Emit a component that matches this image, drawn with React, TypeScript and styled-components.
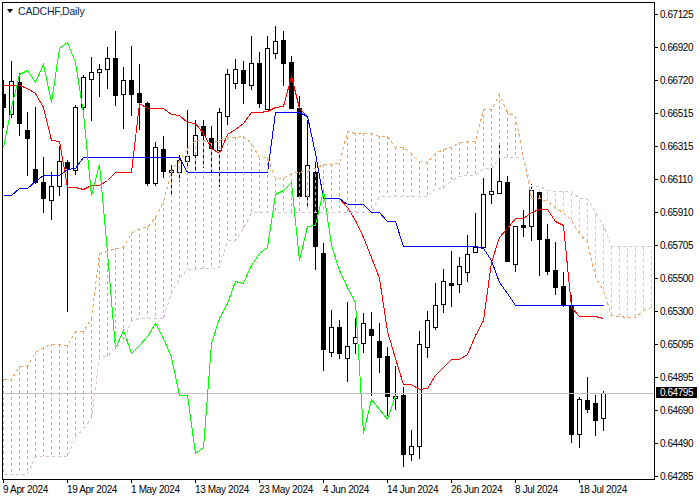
import styled, { createGlobalStyle } from "styled-components";

// [high, low, bodyTop, bodyBottom, bull]
type Candle = [number, number, number, number, number];

const candles: Candle[] = [
  [80, 128, 94, 107, 0], [61, 118, 81, 114, 1], [73, 136, 82, 123, 0], [112, 176, 130, 138, 0],
  [107, 184, 169, 182, 0], [157, 213, 182, 198, 0], [172, 220, 186, 200, 1], [146, 196, 161, 186, 1],
  [160, 312, 162, 168, 0], [105, 175, 107, 170, 1], [75, 112, 77, 107, 1], [57, 121, 72, 79, 1],
  [64, 97, 69, 72, 1], [47, 89, 58, 69, 1], [31, 106, 58, 95, 0], [67, 129, 80, 94, 1],
  [46, 116, 80, 94, 0], [64, 130, 93, 102, 0], [102, 186, 103, 183, 0], [142, 186, 147, 183, 1],
  [136, 178, 149, 171, 0], [165, 197, 170, 172, 1], [155, 182, 160, 172, 1], [110, 168, 156, 161, 1],
  [120, 170, 135, 155, 1], [120, 168, 126, 135, 0], [126, 173, 138, 148, 0], [108, 187, 112, 150, 1],
  [69, 125, 74, 116, 1], [59, 89, 69, 83, 1], [61, 104, 70, 83, 0], [36, 90, 63, 85, 1],
  [52, 108, 63, 103, 0], [36, 110, 48, 109, 1], [26, 59, 41, 53, 1], [31, 86, 40, 63, 0],
  [56, 108, 62, 108, 0], [96, 198, 108, 196, 0], [120, 207, 165, 196, 1], [162, 270, 172, 246, 0],
  [243, 371, 253, 349, 0], [310, 357, 327, 352, 1], [320, 359, 327, 353, 0], [302, 382, 346, 358, 1],
  [318, 354, 337, 343, 1], [313, 353, 323, 343, 1], [312, 396, 329, 335, 0], [323, 373, 341, 357, 0],
  [347, 416, 356, 396, 0], [366, 410, 396, 398, 1], [387, 467, 395, 454, 0], [430, 461, 446, 454, 1],
  [331, 459, 344, 446, 1], [311, 358, 320, 347, 1], [283, 330, 305, 327, 1], [269, 313, 281, 304, 1],
  [251, 307, 283, 285, 0], [257, 293, 266, 284, 1], [235, 282, 254, 272, 1], [213, 252, 247, 252, 1],
  [178, 247, 194, 247, 1], [168, 204, 191, 194, 1], [145, 194, 181, 193, 1], [176, 262, 182, 261, 0],
  [226, 272, 226, 264, 1], [210, 237, 225, 227, 0], [184, 241, 190, 226, 1], [189, 276, 192, 239, 0],
  [224, 275, 239, 271, 0], [242, 295, 270, 287, 0], [272, 307, 286, 304, 0], [295, 443, 305, 434, 0],
  [397, 448, 399, 434, 1], [377, 413, 400, 409, 0], [395, 436, 403, 420, 0], [391, 431, 393, 418, 1],
];

const kijun = [
  195, 195, 188, 188, 181, 175, 175, 175, 169, 168, 157, 157, 157, 157, 157, 157, 157, 157, 157, 157, 157, 157, 157,
  172, 172, 172, 172, 172, 172, 172, 172, 172, 172, 172, 112, 112, 112, 112, 116, 153, 198, 198, 198, 204, 204, 204,
  212, 212, 221, 221, 246, 246, 246, 246, 246, 246, 246, 246, 246, 246, 248, 260, 282, 293, 305, 305, 305, 305, 305,
  305, 305, 305, 305, 305, 305, 305,
];

const tenkan = [
  85, 85, 85, 88, 93, 107, 140, 141, 187, 187, 189, 185, 185, 180, 172, 172, 172, 103, 108, 108, 108, 114, 115, 122,
  123, 133, 148, 153, 134, 129, 123, 112, 112, 111, 107, 106, 76, 108, 116, 153, 198, 198, 198, 207, 220, 237, 257,
  278, 331, 358, 384, 384, 389, 388, 375, 367, 359, 359, 354, 335, 320, 262, 237, 228, 218, 218, 212, 209, 209, 221,
  225, 307, 316, 316, 316, 318,
];

const chikou = [
  147, 107, 74, 70, 82, 64, 102, 48, 42, 62, 113, 195, 164, 252, 348, 330, 353, 345, 336, 323, 338, 357, 395, 395,
  453, 447, 343, 318, 303, 281, 283, 265, 253, 247, 194, 190, 182, 260, 226, 225, 190, 245, 270, 287, 302, 433, 399,
  409, 419, 395,
];

const spanA = [
  379, 379, 366, 366, 352, 347, 344, 344, 345, 331, 331, 318, 253, 251, 248, 247, 233, 228, 227, 217, 202, 170, 160,
  148, 140, 140, 143, 140, 137, 137, 136, 143, 157, 157, 178, 178, 173, 172, 170, 168, 164, 164, 163, 131, 133,
  133, 133, 136, 136, 147, 147, 153, 161, 162, 153, 149, 147, 142, 141, 141, 109, 109, 94, 112, 116, 157, 198, 198,
  201, 208, 212, 220, 233, 242, 277, 290, 315, 316, 317, 317, 310, 307,
];

const spanB = [
  474, 474, 474, 474, 456, 456, 456, 456, 456, 437, 428, 418, 357, 356, 347, 342, 320, 318, 318, 318, 318, 292, 278,
  269, 269, 268, 268, 267, 240, 240, 228, 212, 212, 212, 212, 212, 212, 212, 212, 212, 212, 212, 212, 212, 212, 212,
  212, 196, 196, 196, 196, 196, 196, 196, 188, 188, 180, 176, 175, 175, 168, 168, 157, 157, 157, 157, 186, 186, 190,
  191, 191, 191, 198, 199, 212, 225, 246, 246, 246, 246, 246, 246,
];

const prices = [
  "0.67125", "0.66920", "0.66720", "0.66515", "0.66315", "0.66110", "0.65910", "0.65705",
  "0.65500", "0.65300", "0.65095", "0.64895", "0.64690", "0.64490", "0.64285",
];

const dates = [
  "9 Apr 2024", "19 Apr 2024", "1 May 2024", "13 May 2024", "23 May 2024",
  "4 Jun 2024", "14 Jun 2024", "26 Jun 2024", "8 Jul 2024", "18 Jul 2024",
];

const px = (i: number) => 3 + 8 * i;
const toPoints = (ys: number[]) => ys.map((y, i) => `${px(i) + 0.5},${y + 0.5}`).join(" ");

const GlobalStyle = createGlobalStyle`
  html, body {
    margin: 0;
    background: #fff;
  }
`;

const Page = styled.div`
  width: 700px;
  height: 500px;
  padding: 2px 0 0 2px;
  box-sizing: border-box;
  overflow: hidden;
  background: #fff;
  color: #000;
  font-family: "Liberation Sans", Arial, sans-serif;
  font-size: 10px;
  letter-spacing: -0.45px;
`;

const ChartRow = styled.div`
  display: flex;
  align-items: flex-start;
`;

const Plot = styled.div`
  position: relative;
  width: 651px;
  height: 476px;
  border: 1px solid #000;
`;

const ChartSvg = styled.svg`
  display: block;
  shape-rendering: crispEdges;
`;

const Title = styled.div`
  position: absolute;
  left: 4px;
  top: 1px;
  display: flex;
  align-items: center;
  gap: 5px;
  height: 14px;
  font-size: 10.5px;
  letter-spacing: -0.2px;
  color: #0b2a4a;
`;

const Caret = styled.span`
  width: 0;
  height: 0;
  border-left: 3.5px solid transparent;
  border-right: 3.5px solid transparent;
  border-top: 4px solid #000;
`;

const PriceAxis = styled.div`
  position: relative;
  display: flex;
  flex-direction: column;
  gap: 19px;
  padding-top: 5px;
  height: 471px;
`;

const PriceRow = styled.div`
  display: flex;
  align-items: center;
  height: 14px;
  gap: 2px;
  flex-shrink: 0;

  &::before {
    content: "";
    width: 3px;
    height: 1px;
    background: #000;
  }
`;

const PriceTag = styled.div`
  position: absolute;
  left: 1px;
  top: 385px;
  width: 41px;
  height: 11px;
  padding-left: 4px;
  box-sizing: border-box;
  display: flex;
  align-items: center;
  background: #000;
  color: #fff;
`;

const TimeAxis = styled.div`
  display: flex;
  padding-left: 1px;
`;

const TimeCell = styled.div`
  width: 64px;
  flex-shrink: 0;
  white-space: nowrap;
  height: 16px;
  line-height: 16px;
  position: relative;
  padding-top: 2px;
  letter-spacing: -0.35px;

  &::before {
    content: "";
    position: absolute;
    left: 0;
    top: 0;
    width: 1px;
    height: 3px;
    background: #000;
  }
`;

function CandleMark({ candle, index }: { candle: Candle; index: number }) {
  const [high, low, top, bottom, bull] = candle;
  const x = px(index);
  return (
    <g>
      <rect x={x} y={high} width={1} height={low - high} fill="#000" />
      {bull ? (
        <rect x={x - 1.5} y={top + 0.5} width={4} height={bottom - top} fill="#fff" stroke="#000" strokeWidth={1} />
      ) : (
        <rect x={x - 2} y={top} width={5} height={bottom - top + 1} fill="#000" />
      )}
    </g>
  );
}

function Cloud() {
  return (
    <g fill="none" strokeWidth={1} strokeDasharray="3 3">
      {spanA.map((a, i) => (
        <line
          key={i}
          x1={px(i) + 0.5}
          x2={px(i) + 0.5}
          y1={a}
          y2={spanB[i]}
          stroke={a < spanB[i] ? "#F4A460" : "#D8BFD8"}
        />
      ))}
      <polyline points={toPoints(spanB)} stroke="#D8BFD8" />
      <polyline points={toPoints(spanA)} stroke="#F4A460" />
    </g>
  );
}

export default function App() {
  return (
    <>
      <GlobalStyle />
      <Page>
        <ChartRow>
          <Plot>
            <ChartSvg width={651} height={476} viewBox="3 3 651 476">
              {candles.map((c, i) => (
                <CandleMark key={i} candle={c} index={i} />
              ))}
              <line x1={3} x2={654} y1={393.5} y2={393.5} stroke="#C0C0C0" />
              <polyline points={toPoints(tenkan)} fill="none" stroke="#FF0000" />
              <polyline points={toPoints(kijun)} fill="none" stroke="#0000FF" />
              <polyline points={toPoints(chikou)} fill="none" stroke="#00FF00" />
              <Cloud />
            </ChartSvg>
            <Title>
              <Caret />
              CADCHF,Daily
            </Title>
          </Plot>
          <PriceAxis>
            {prices.map((p) => (
              <PriceRow key={p}>{p}</PriceRow>
            ))}
            <PriceTag>0.64795</PriceTag>
          </PriceAxis>
        </ChartRow>
        <TimeAxis>
          {dates.map((d) => (
            <TimeCell key={d}>{d}</TimeCell>
          ))}
        </TimeAxis>
      </Page>
    </>
  );
}
